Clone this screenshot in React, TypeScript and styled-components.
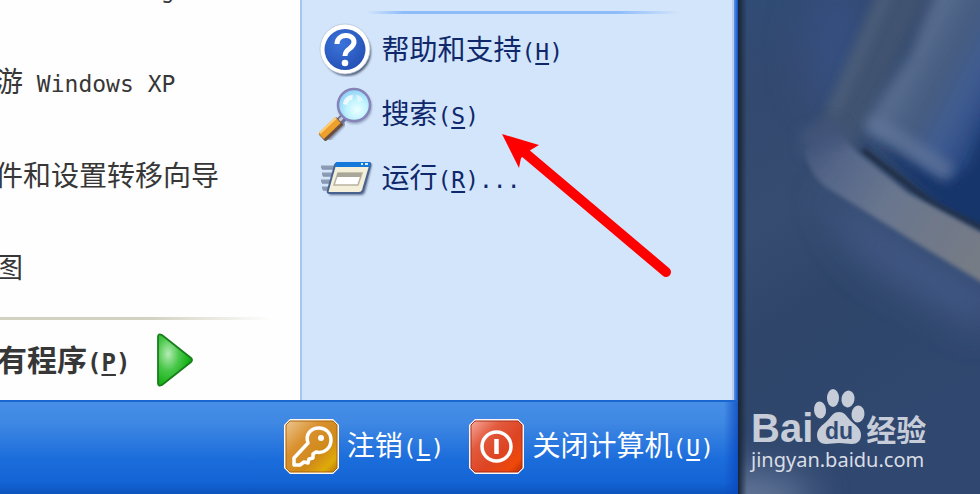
import React from "react";
import styled, { createGlobalStyle, css } from "styled-components";

const Global = createGlobalStyle`
  * { box-sizing: border-box; }
  body { margin: 0; overflow: hidden; background: #2f466e; }
  button { border: 0; margin: 0; padding: 0; background: none; color: inherit; font: inherit; text-align: left; cursor: pointer; }
`;

const Desktop = styled.div`
  display: grid;
  grid-template-columns: 738fr 242fr;
  height: 100vh;
  font-family: "Noto Sans CJK SC", sans-serif;
  font-size: 28px;
  line-height: 40px;
`;

const StartMenu = styled.nav`
  display: flex;
  flex-direction: column;
  min-width: 0;
  min-height: 0;
  background: #1159d0;
`;

const Columns = styled.div`
  flex: 1;
  display: grid;
  grid-template-columns: 300fr 433fr;
  grid-template-rows: minmax(0, 1fr);
  min-height: 0;
  padding-right: 4px;
  background: linear-gradient(to right, #5e94e6, #0d50c6) right / 4px 100% no-repeat;
`;

const Programs = styled.section`
  display: flex;
  flex-direction: column;
  justify-content: flex-end;
  overflow: hidden;
  min-width: 0;
  background: #fefefe;
  color: #373737;
`;

const ProgramList = styled.div`
  display: flex;
  flex-direction: column;
  flex: none;
  margin-left: -33px;
`;

const ProgramItem = styled.button`
  display: flex;
  align-items: center;
  flex: none;
  height: 92px;
  white-space: pre;
`;

const AllPrograms = styled.button`
  display: flex;
  flex: none;
  align-items: center;
  gap: 26px;
  height: 80px;
  margin-left: -33px;
  font-size: 30px;
  font-weight: 700;
  white-space: nowrap;
`;

const Rule = styled.div<{ $kind: "left" | "right" }>`
  flex: none;
  height: 3px;
  ${(p) =>
    p.$kind === "left"
      ? css`
          margin: 5px 28px 0 0;
          background: linear-gradient(to right, #d2d2c2 0 55%, rgba(210, 210, 194, 0));
        `
      : css`
          margin: 0 52px 0 64px;
          background: linear-gradient(to right, #d3e5fa, #8ebcfb 12% 80%, #d3e5fa);
        `}
`;

const Places = styled.section`
  position: relative;
  display: flex;
  flex-direction: column;
  min-width: 0;
  padding-top: 11px;
  border-left: 2px solid #a3c6f3;
  border-right: 2px solid #b9cdec;
  background: #d3e5fa;
  color: #0f286b;
`;

const PlaceList = styled.div`
  display: flex;
  flex-direction: column;
  padding: 4px 0 0 17px;
`;

const PlaceItem = styled.button`
  display: flex;
  align-items: center;
  gap: 8px;
  height: 64px;
  white-space: nowrap;
`;

const Pointer = styled.svg`
  position: absolute;
  top: 130px;
  left: 196px;
  pointer-events: none;
`;

const Footer = styled.footer`
  display: flex;
  flex: none;
  justify-content: flex-end;
  align-items: center;
  gap: 25px;
  height: 94px;
  padding: 0 24px 4px 0;
  border-top: 2px solid #1a66cf;
  color: #fff;
  background:
    linear-gradient(to right, rgba(10, 70, 190, 0), rgba(10, 70, 190, 0.75)) right / 14px 100% no-repeat,
    linear-gradient(#468ee6, #3f88e3 22%, #1c6ddc 62%, #1363d4 88%, #0c53bd);
`;

const PowerItem = styled.button`
  display: flex;
  align-items: center;
  gap: 8px;
  white-space: nowrap;
`;

const Latin = styled.span<{ $large?: boolean }>`
  font-family: "DejaVu Sans Mono", monospace;
  font-size: ${(p) => (p.$large ? 24 : 23)}px;
`;

const Key = styled.span`
  text-decoration: underline;
  text-decoration-thickness: 2px;
  text-underline-offset: 3px;
`;

const Wallpaper = styled.main`
  position: relative;
  display: flex;
  flex-direction: column;
  justify-content: flex-end;
  min-width: 0;
  overflow: hidden;
`;

const Scene = styled.svg`
  position: absolute;
  inset: 0;
  width: 100%;
  height: 100%;
`;

const Watermark = styled.div`
  position: relative;
  padding: 0 0 20px 13px;
  color: #c6ccd8;
`;

const Brand = styled.div`
  display: flex;
  align-items: flex-end;
  height: 58px;
  white-space: nowrap;
`;

const BrandLatin = styled.span`
  font-family: "Liberation Sans", sans-serif;
  font-size: 40px;
  font-weight: 700;
  line-height: 36px;
`;

const BrandHan = styled.span`
  font-size: 30px;
  font-weight: 700;
  line-height: 36px;
`;

const SiteLink = styled.a`
  display: block;
  color: #d9dde5;
  font-family: "Noto Sans", sans-serif;
  font-size: 20px;
  line-height: 28px;
  text-decoration: none;
`;

const HotKey = ({ letter, large, tail = "" }: { letter: string; large?: boolean; tail?: string }) => (
  <Latin $large={large}>
    (<Key>{letter}</Key>){tail}
  </Latin>
);

const HelpIcon = () => (
  <svg width="54" height="54" viewBox="0 0 54 54" aria-hidden="true">
    <defs>
      <radialGradient id="help" cx=".4" cy=".35" r=".7">
        <stop offset="0" stopColor="#3c74dc" />
        <stop offset="1" stopColor="#2450b4" />
      </radialGradient>
      <filter id="soft"><feGaussianBlur stdDeviation="1.2" /></filter>
    </defs>
    <circle cx="28" cy="29" r="24" fill="#52617c" filter="url(#soft)" />
    <circle cx="26" cy="26" r="25" fill="#fff" stroke="#b8c4d8" strokeWidth=".8" />
    <circle cx="26" cy="26.500" r="20.500" fill="url(#help)" />
    <path d="M18 21c0-11 17-11 17-2 0 7-9 6-9 14" fill="none" stroke="#fff" strokeWidth="5" />
    <circle cx="26" cy="40" r="3.300" fill="#fff" />
  </svg>
);

const SearchIcon = () => (
  <svg width="54" height="54" viewBox="0 0 54 54" aria-hidden="true">
    <defs>
      <radialGradient id="lens" cx=".6" cy=".65" r=".65">
        <stop offset="0" stopColor="#ecffff" />
        <stop offset=".5" stopColor="#c0f3ff" />
        <stop offset="1" stopColor="#8fcff5" />
      </radialGradient>
    </defs>
    <path d="M24 34 7 51" stroke="#66708a" strokeWidth="9" opacity=".8" filter="url(#soft)" />
    <circle cx="36" cy="20" r="17" fill="#6e7fa0" opacity=".6" filter="url(#soft)" />
    <path d="m25 30-7 7" stroke="#6b6f98" strokeWidth="8" />
    <path d="m25 29-7 7" stroke="#c6c8dc" strokeWidth="3" />
    <path d="M21 34 3 51" stroke="#6b5040" strokeWidth="10" />
    <path d="M19 33 2 49" stroke="#eda02c" strokeWidth="8" />
    <path d="M17 31 1 46" stroke="#ffd07a" strokeWidth="2" />
    <circle cx="35" cy="18" r="16" fill="url(#lens)" stroke="#8583b8" strokeWidth="2.500" />
    <path d="M24 17c1-6 5-9 10-9l-1 5c-3 0-4 2-5 5Z" fill="#fff" opacity=".75" />
    <path d="M37 8c3 0 6 2 7 5l-5 2Z" fill="#fff" opacity=".5" />
  </svg>
);

const RunIcon = () => (
  <svg width="54" height="54" viewBox="0 0 54 54" aria-hidden="true">
    <path d="M2 16h14M3 23h11M2 30h10M3 37h8" stroke="#8e9bb4" strokeWidth="3" />
    <path d="M3 18h12M4 25h10M3 32h8M4 39h7" stroke="#5e6c8a" strokeWidth="1" />
    <path d="M19 13h34l-7 28q-1 3-4 3H10Z" fill="#5f6f90" filter="url(#soft)" />
    <path d="M18 12h32q2 0 1 3l-7 24q-1 3-4 3H10q-2 0-1-3l7-25q1-2 2-2Z" fill="#f4efd9" stroke="#47628f" strokeWidth="2" />
    <path d="M18 11h32q2 1 1 5H16q0-4 2-5Z" fill="#1479da" />
    <path d="M42 13h2m2 0h3" stroke="#d8eeff" strokeWidth="2" />
    <path d="M19 22h24l-4 12H15Z" fill="#fff" stroke="#b8b49f" strokeWidth="1.500" />
    <path d="M18 24h24" stroke="#a9a79a" strokeWidth="4" />
  </svg>
);

const PlayIcon = () => (
  <svg width="38" height="54" viewBox="0 0 38 54" aria-hidden="true">
    <defs>
      <radialGradient id="play" cx=".3" cy=".38" r=".65">
        <stop offset="0" stopColor="#b5ecb5" />
        <stop offset=".5" stopColor="#48c748" />
        <stop offset="1" stopColor="#0fae0f" />
      </radialGradient>
    </defs>
    <path d="M2 4q0-4 4-2l29 23q2 2 0 4L6 52q-4 2-4-2Z" fill="url(#play)" stroke="#197d1d" strokeWidth="1.800" />
  </svg>
);

const KeyIcon = () => (
  <svg width="55" height="55" viewBox="0 0 55 55" aria-hidden="true">
    <defs>
      <linearGradient id="gold" x1="0" y1="0" x2="1" y2="1">
        <stop offset="0" stopColor="#ecc690" />
        <stop offset=".35" stopColor="#d9902e" />
        <stop offset=".65" stopColor="#d08a18" />
        <stop offset=".85" stopColor="#dfab08" />
        <stop offset="1" stopColor="#b87408" />
      </linearGradient>
    </defs>
    <path d="M6 0h43l6 6v43l-6 6H6l-6-6V6Z" fill="#fff8ea" />
    <path d="M6 2h43l4 4v43l-4 4H6l-4-4V6Z" fill="url(#gold)" stroke="#a9650b" strokeWidth="1" />
    <path d="M24 24c-3-9 3-15 11-15 7 0 12 5 12 12 0 8-7 14-15 12l-3 2v4l-4 1-1 4-4-1-4 3h-6v-7Z" fill="none" stroke="#fff" strokeWidth="3.500" strokeLinejoin="round" />
    <circle cx="37" cy="19" r="3" fill="#fff" />
  </svg>
);

const ShutdownIcon = () => (
  <svg width="55" height="55" viewBox="0 0 55 55" aria-hidden="true">
    <defs>
      <linearGradient id="red" x1="0" y1="0" x2="1" y2="1">
        <stop offset="0" stopColor="#f5a99b" />
        <stop offset=".3" stopColor="#e25a3e" />
        <stop offset=".6" stopColor="#dd4422" />
        <stop offset=".85" stopColor="#ef4809" />
        <stop offset="1" stopColor="#b52c05" />
      </linearGradient>
    </defs>
    <path d="M6 0h43l6 6v43l-6 6H6l-6-6V6Z" fill="#fff3ef" />
    <path d="M6 2h43l4 4v43l-4 4H6l-4-4V6Z" fill="url(#red)" stroke="#a92d18" strokeWidth="1" />
    <circle cx="27.500" cy="27.500" r="14.500" fill="none" stroke="#fff" strokeWidth="3.500" />
    <path d="M27.500 20v15" stroke="#fff" strokeWidth="4.500" />
  </svg>
);

const PawIcon = () => (
  <svg width="53" height="58" viewBox="0 0 53 58" aria-hidden="true">
    <g fill="#c6ccd8">
      <ellipse cx="7" cy="22" rx="6" ry="8.500" transform="rotate(-6 7 22)" />
      <ellipse cx="20" cy="10" rx="6" ry="9" />
      <ellipse cx="35" cy="11" rx="6.500" ry="8.500" transform="rotate(10 35 11)" />
      <ellipse cx="45" cy="26" rx="6.500" ry="8.500" transform="rotate(6 45 26)" />
      <path d="M26 24c6 0 8 5 12 9s10 7 10 14c0 6-4 9-9 9-5 0-8-1-13-1s-8 1-13 1c-5 0-9-3-9-9 0-7 6-10 10-14s6-9 12-9Z" />
    </g>
    <text x="26" y="51" textAnchor="middle" fill="#304a74" fontFamily="Liberation Sans, sans-serif" fontSize="23" fontWeight="700">
      du
    </text>
  </svg>
);

const WallpaperScene = () => (
  <Scene viewBox="0 0 242 494" preserveAspectRatio="xMidYMid slice" aria-hidden="true">
    <defs>
      <linearGradient id="sky" x1="0" y1="0" x2=".3" y2="1">
        <stop offset="0" stopColor="#304c76" />
        <stop offset=".2" stopColor="#34496f" />
        <stop offset=".45" stopColor="#364c70" />
        <stop offset=".65" stopColor="#2f466a" />
        <stop offset="1" stopColor="#30476f" />
      </linearGradient>
      <linearGradient id="rim" gradientUnits="userSpaceOnUse" x1="68" y1="135" x2="242" y2="255">
        <stop offset="0" stopColor="#42557a" />
        <stop offset=".22" stopColor="#56678a" />
        <stop offset=".5" stopColor="#69768e" />
        <stop offset="1" stopColor="#767b86" />
      </linearGradient>
      <linearGradient id="pane" gradientUnits="userSpaceOnUse" x1="130" y1="60" x2="245" y2="120">
        <stop offset="0" stopColor="#4a5e80" />
        <stop offset=".3" stopColor="#566b8e" />
        <stop offset=".55" stopColor="#465c80" />
        <stop offset=".8" stopColor="#405c92" />
        <stop offset="1" stopColor="#2c4a82" />
      </linearGradient>
      <linearGradient id="edge">
        <stop offset="0" stopColor="#182434" />
        <stop offset="1" stopColor="#182434" stopOpacity="0" />
      </linearGradient>
      <filter id="b2" x="-50%" y="-50%" width="200%" height="200%"><feGaussianBlur stdDeviation="2" /></filter>
      <filter id="b6" x="-50%" y="-50%" width="200%" height="200%"><feGaussianBlur stdDeviation="6" /></filter>
      <filter id="b20" x="-100%" y="-100%" width="300%" height="300%"><feGaussianBlur stdDeviation="20" /></filter>
    </defs>
    <rect width="242" height="494" fill="url(#sky)" />
    <ellipse cx="100" cy="50" rx="34" ry="65" fill="#38528a" opacity=".6" filter="url(#b20)" />
    <path d="M80 190 260 300 250 330 130 260Z" fill="#4d6495" opacity=".85" filter="url(#b20)" />
    <ellipse cx="0" cy="500" rx="75" ry="28" fill="#7587a8" opacity=".8" filter="url(#b20)" />
    <path d="M148-25 98 90 72 140 110 160 200-25Z" fill="#40536f" filter="url(#b6)" />
    <path d="m155-22-60 135" stroke="#50627f" strokeWidth="8" filter="url(#b6)" />
    <path d="M202-20 172 55 124 125 210 195 270 230V-20Z" fill="url(#pane)" filter="url(#b6)" />
    <path d="m262 90-32 76-20 16-76-42 66 68 80 45Z" fill="#17356a" filter="url(#b6)" />
    <path d="m132 124 28 14 52 36" fill="none" stroke="#61749a" strokeWidth="16" opacity=".8" filter="url(#b6)" />
    <path d="m125 150 70 54 64 32" fill="none" stroke="#202f46" strokeWidth="6" filter="url(#b2)" />
    <path d="M67 152 84 137 102 134 120 153 170 193 258 240V291L175 241 88 187Q72 175 67 152Z" fill="url(#rim)" filter="url(#b2)" />
    <path d="M60 130 98 118 118 142 92 148 64 158Z" fill="#42557a" opacity=".8" filter="url(#b6)" />
    <rect width="9" height="494" fill="url(#edge)" />
  </Scene>
);

const programs: React.ReactNode[] = [
  <Latin key="messenger">Windows Messenger</Latin>,
  <span key="tour">漫游<Latin> Windows XP</Latin></span>,
  "文件和设置转移向导",
  "画图",
];

const places = [
  { icon: <HelpIcon />, label: "帮助和支持", letter: "H" },
  { icon: <SearchIcon />, label: "搜索", letter: "S" },
  { icon: <RunIcon />, label: "运行", letter: "R", tail: "..." },
];

export default function App() {
  return (
    <>
      <Global />
      <Desktop>
        <StartMenu>
          <Columns>
            <Programs>
              <ProgramList>
                {programs.map((label, i) => (
                  <ProgramItem key={i}>{label}</ProgramItem>
                ))}
              </ProgramList>
              <Rule $kind="left" />
              <AllPrograms>
                <span>所有程序<HotKey letter="P" large /></span>
                <PlayIcon />
              </AllPrograms>
            </Programs>
            <Places>
              <Rule $kind="right" />
              <PlaceList>
                {places.map((p) => (
                  <PlaceItem key={p.letter}>
                    {p.icon}
                    <span>{p.label}<HotKey letter={p.letter} tail={p.tail} /></span>
                  </PlaceItem>
                ))}
              </PlaceList>
              <Pointer width="180" height="152" viewBox="0 0 180 152" aria-hidden="true">
                <path d="m26 22 142 120" stroke="#f00" strokeWidth="10" strokeLinecap="round" />
                <path d="m4 4 37 11-10 6-8 7-2 10Z" fill="#f00" />
              </Pointer>
            </Places>
          </Columns>
          <Footer>
            <PowerItem>
              <KeyIcon />
              <span>注销<HotKey letter="L" /></span>
            </PowerItem>
            <PowerItem>
              <ShutdownIcon />
              <span>关闭计算机<HotKey letter="U" /></span>
            </PowerItem>
          </Footer>
        </StartMenu>
        <Wallpaper>
          <WallpaperScene />
          <Watermark>
            <Brand>
              <BrandLatin>Bai</BrandLatin>
              <PawIcon />
              <BrandHan>经验</BrandHan>
            </Brand>
            <SiteLink href="#">jingyan.baidu.com</SiteLink>
          </Watermark>
        </Wallpaper>
      </Desktop>
    </>
  );
}
